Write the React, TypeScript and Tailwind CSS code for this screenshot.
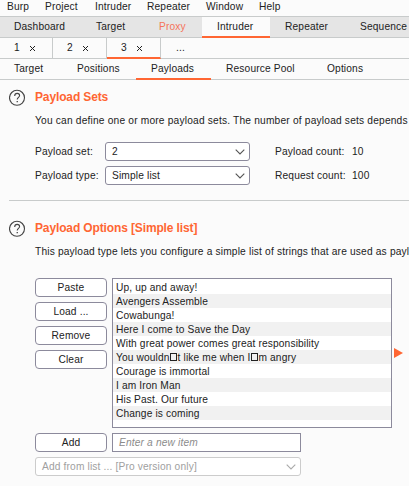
import React from "react";

const payloads = [
  "Up, up and away!",
  "Avengers Assemble",
  "Cowabunga!",
  "Here I come to Save the Day",
  "With great power comes great responsibility",
  "You wouldn\u25A1t like me when I\u25A1m angry",
  "Courage is immortal",
  "I am Iron Man",
  "His Past. Our future",
  "Change is coming",
];

function Missing() {
  return <span className="mx-[0.5px] inline-block h-[8px] w-[7px] border border-[#222]" />;
}

function PayloadText({ text }: { text: string }) {
  return (
    <>
      {text.split("\u25A1").map((part, i) => (
        <React.Fragment key={i}>
          {i > 0 && <Missing />}
          {part}
        </React.Fragment>
      ))}
    </>
  );
}

function Help() {
  return (
    <svg className="-mt-px h-[17px] w-[17px] shrink-0" viewBox="0 0 17 17" fill="none" stroke="#444" strokeWidth="1.1">
      <circle cx="8" cy="8.8" r="7.5" />
      <path d="M5.7 6.9C5.7 5.3 6.7 4.4 8.2 4.4C9.6 4.4 10.6 5.2 10.6 6.5C10.6 8.3 8.2 8.4 8.2 10.6" />
      <path d="M7.6 12.6h1.3" strokeWidth="1.3" />
    </svg>
  );
}

function Chevron({ color }: { color: string }) {
  return (
    <svg className="h-[6px] w-[10px] shrink-0" viewBox="0 0 10 6" fill="none" stroke={color} strokeWidth="1.1">
      <path d="M0.7 0.7L5 5L9.3 0.7" />
    </svg>
  );
}

function Close() {
  return (
    <svg className="mt-px h-[5px] w-[5px]" viewBox="0 0 5 5" stroke="#222" strokeWidth="1">
      <path d="M0 0L5 5M5 0L0 5" />
    </svg>
  );
}

function Select({ value }: { value: string }) {
  return (
    <div className="flex h-[19px] w-[145px] items-center justify-between rounded-[3px] border border-[#8c8a9c] bg-white pr-[4px] pl-[6px]">
      <span>{value}</span>
      <Chevron color="#555" />
    </div>
  );
}

function Button({ label }: { label: string }) {
  return (
    <button className="flex h-[19px] w-[72px] shrink-0 items-center justify-center rounded-[4px] border border-[#8c8a9c] bg-white">
      {label}
    </button>
  );
}

export default function App() {
  return (
    <div className="h-[486px] w-[409px] overflow-hidden bg-[#fbfbfb] font-['Liberation_Sans',Arial,sans-serif] text-[10.2px] leading-[14px] tracking-[0.15px] whitespace-nowrap text-[#222]">
      <nav className="flex h-[17px] border-b border-[#c8cbcb] pl-[7px]">
        <span className="w-[38px]">Burp</span>
        <span className="w-[50px]">Project</span>
        <span className="w-[52px]">Intruder</span>
        <span className="w-[59px]">Repeater</span>
        <span className="w-[53px]">Window</span>
        <span>Help</span>
      </nav>

      <div className="flex h-[21px] border-b border-[#c8cbcb] bg-[#e5e5e5] leading-[20px]">
        <span className="w-[96px] shrink-0 pl-[14px]">Dashboard</span>
        <span className="w-[63px] shrink-0">Target</span>
        <span className="w-[43px] shrink-0 text-[#f5745a]">Proxy</span>
        <span className="h-[21px] w-[68px] shrink-0 border-b-2 border-[#ff6633] bg-[#fbfbfb] pl-[15px]">Intruder</span>
        <span className="w-[75px] shrink-0 pl-[15px]">Repeater</span>
        <span className="pl-[15px]">Sequence</span>
      </div>

      <div className="flex h-[21px] border-b border-[#c8cbcb]">
        {["1", "2", "3"].map((n, i) => (
          <div
            key={n}
            className={
              "flex items-center border-r border-r-[#c8cbcb] pl-[14px] " +
              (i === 0 ? "w-[53px] h-[20px]" : i === 1 ? "w-[54px] h-[20px]" : "w-[54px] h-[21px] pt-px border-b-2 border-b-[#ff6633]")
            }
          >
            <span className="w-[16px]">{n}</span>
            <Close />
          </div>
        ))}
        <span className="pl-[15px] leading-[20px]">...</span>
      </div>

      <div className="flex h-[21px] border-b border-[#c8cbcb] leading-[20px]">
        <span className="w-[77px] pl-[14px]">Target</span>
        <span className="w-[59px]">Positions</span>
        <span className="h-[21px] w-[75px] border-b-2 border-[#ff6633] pl-[15px]">Payloads</span>
        <span className="w-[116px] pl-[15px]">Resource Pool</span>
        <span>Options</span>
      </div>

      <section className="ml-[9px] h-[121px] border-b border-[#c8cbcb] pt-[10px]">
        <div className="flex h-[17px] gap-[9px]">
          <Help />
          <h2 className="text-[12px] leading-[14px] font-bold tracking-[-0.13px] text-[#ff6633]">Payload Sets</h2>
        </div>
        <p className="pt-[7px] pl-[26px] tracking-[0.19px]">You can define one or more payload sets. The number of payload sets depends</p>
        <div className="mt-[14px] ml-[26px] grid grid-cols-[70px_170px_77px_auto] grid-rows-[19px_19px] items-center gap-y-[5px]">
          <span>Payload set:</span>
          <Select value="2" />
          <span>Payload count:</span>
          <span>10</span>
          <span>Payload type:</span>
          <Select value="Simple list" />
          <span>Request count:</span>
          <span>100</span>
        </div>
      </section>

      <section className="pt-[20px] pl-[9px]">
        <div className="flex h-[17px] gap-[9px]">
          <Help />
          <h2 className="text-[12px] leading-[14px] font-bold tracking-[-0.13px] text-[#ff6633]">Payload Options [Simple list]</h2>
        </div>
        <p className="pt-[7px] pl-[26px] tracking-[0.17px]">This payload type lets you configure a simple list of strings that are used as payl</p>
        <div className="mt-[19px] ml-[26px] flex">
          <div className="flex w-[77px] flex-col gap-[5px]">
            <Button label="Paste" />
            <Button label="Load ..." />
            <Button label="Remove" />
            <Button label="Clear" />
          </div>
          <ul className="h-[150px] w-[280px] border border-[#8c8a9c] bg-white pt-px">
            {payloads.map((p) => (
              <li key={p} className="h-[14px] pl-[3px] leading-[15px] tracking-[0.13px] even:bg-[#f1f1f1]">
                <PayloadText text={p} />
              </li>
            ))}
          </ul>
          <svg className="mt-[70px] ml-[2px] h-[10px] w-[9px]" viewBox="0 0 9 10" fill="#ff6633">
            <path d="M0 0L9 5L0 10Z" />
          </svg>
        </div>
        <div className="mt-[5px] ml-[26px] flex gap-[5px]">
          <Button label="Add" />
          <div className="h-[19px] w-[189px] border border-[#8c8a9c] bg-white pl-[6px] leading-[18px] text-[#8c8c8c] italic">
            Enter a new item
          </div>
        </div>
        <div className="mt-[5px] ml-[26px] flex h-[19px] w-[266px] items-center justify-between rounded-[3px] border border-[#ccc] bg-white pr-[4px] pl-[6px] text-[#a0a0a0]">
          <span>Add from list ... [Pro version only]</span>
          <Chevron color="#aaa" />
        </div>
      </section>
    </div>
  );
}
